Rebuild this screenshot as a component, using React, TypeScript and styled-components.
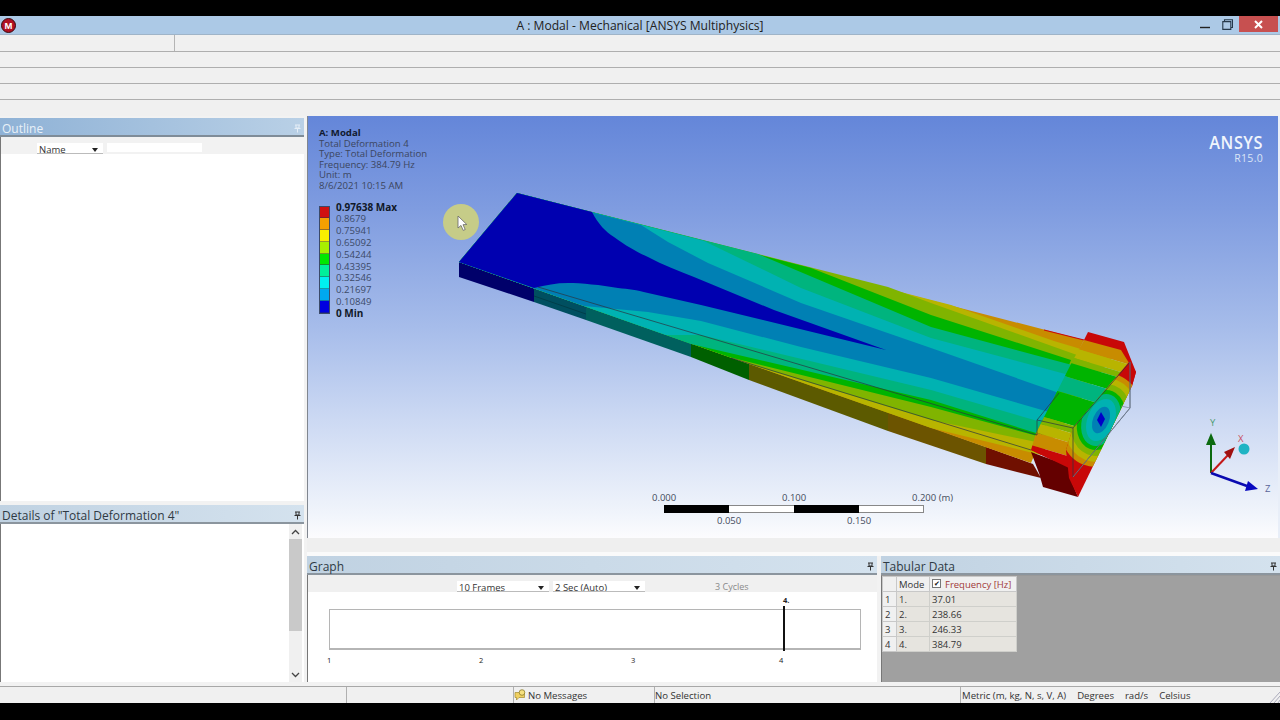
import React from "react";
import styled, { createGlobalStyle } from "styled-components";

const Global = createGlobalStyle`
  html, body { margin: 0; padding: 0; background: #000; }
  body { font-family: "Open Sans", "Noto Sans", Arial, sans-serif; color: #222; }
  * { box-sizing: border-box; }
`;

const Page = styled.div`
  width: 1280px; height: 720px; display: flex; flex-direction: column; background: #000; overflow: hidden;
`;
const BlackBar = styled.div<{ $h: number }>`
  height: ${(p) => p.$h}px; flex: none; background: #000;
`;
const TitleBar = styled.div`
  height: 19px; flex: none; background: #acc9e6; position: relative; display: flex; align-items: center; justify-content: center;
  font-size: 12.1px; color: #222; border-bottom: 1px solid #9fb4c8;
`;
const AppIcon = styled.svg`
  position: absolute; left: 1px; top: 2px; width: 15px; height: 15px;
`;
const WinControls = styled.div`
  position: absolute; right: 2px; top: 0; height: 16px; display: flex; align-items: flex-start;
`;
const WinButton = styled.div<{ $close?: boolean }>`
  width: ${(p) => (p.$close ? 39 : 23)}px; height: 16px; background: ${(p) => (p.$close ? "#c75050" : "transparent")};
  display: flex; align-items: center; justify-content: center;
`;
const ToolRow = styled.div<{ $h?: number; $last?: boolean }>`
  height: ${(p) => p.$h ?? 16}px; flex: none; background: #f0f0f0; display: flex;
  border-bottom: ${(p) => (p.$last ? "none" : "1px solid #aeaeae")};
`;
const ToolCell = styled.div`
  width: 175px; border-right: 1px solid #b4b4b4;
`;
const Main = styled.div`
  flex: 1; min-height: 0; display: flex; background: #f2f2f2;
`;
const LeftCol = styled.div`
  width: 304px; flex: none; display: flex; flex-direction: column; padding: 2px 0 4px; gap: 4px;
`;
const RightCol = styled.div`
  flex: 1; min-width: 0; margin-left: 3px; display: flex; flex-direction: column; padding-bottom: 4px;
`;
const Panel = styled.section<{ $grow?: boolean; $h?: number; $w?: number }>`
  display: flex; flex-direction: column; min-width: 0;
  ${(p) => (p.$grow ? "flex: 1;" : "")}
  ${(p) => (p.$h ? `height: ${p.$h}px; flex: none;` : "")}
  ${(p) => (p.$w ? `width: ${p.$w}px; flex: none;` : "")}
`;
const PanelHead = styled.header<{ $active?: boolean }>`
  height: 19px; flex: none; display: flex; align-items: center; justify-content: space-between; padding: 3px 3px 0 2px;
  font-size: 12px; border-bottom: 2px solid ${(p) => (p.$active ? "#7f8c98" : "#8b959e")};
  color: ${(p) => (p.$active ? "#e9f1f8" : "#2f3a44")};
  background: ${(p) =>
    p.$active ? "linear-gradient(90deg,#8fb2d6,#b9d0e6)" : "linear-gradient(90deg,#c0d2e2,#d4e2ee)"};
`;
const PanelBody = styled.div`
  flex: 1; min-height: 0; position: relative; background: #fff; border-left: 1px solid #777;
  display: flex; flex-direction: column;
`;
const FilterRow = styled.div`
  height: 17px; flex: none; background: #f2f2f2; display: flex; align-items: flex-start; padding: 6px 0 0 36px; gap: 4px;
`;
const ClipSelect = styled.div<{ $w: number }>`
  width: ${(p) => p.$w}px; height: 11px; background: #fff; overflow: hidden; border-bottom: 1px solid #bbb;
  display: flex; justify-content: space-between; align-items: flex-start; padding: 0 5px 0 2px;
  font-size: 9.5px; line-height: 14px; color: #333; white-space: nowrap;
`;
const Arrow = styled.i`
  display: block; width: 0; height: 0; margin-top: 5px; border-left: 3.5px solid transparent; border-right: 3.5px solid transparent; border-top: 4px solid #222;
`;
const SearchBox = styled.div`
  width: 95px; height: 9px; background: #fff;
`;
const DetailBody = styled.div`
  flex: 1; display: flex; justify-content: flex-end; padding-right: 2px;
`;
const Scroll = styled.div`
  width: 13px; background: #f0f0f0; display: flex; flex-direction: column; align-items: center;
`;
const ScrollBtn = styled.div`
  height: 15px; display: flex; align-items: center; justify-content: center; flex: none;
`;
const ScrollThumb = styled.div`
  width: 100%; height: 92px; flex: none; background: #c9c9c9;
`;
const ScrollTrack = styled.div`
  flex: 1;
`;
const Viewport = styled.div`
  height: 422px; flex: none; position: relative; overflow: hidden; border-left: 1px solid #80868f; border-right: 2px solid #e8eef8;
  background: linear-gradient(180deg,#6486d9 0%,#7f9ce0 22%,#a6bcea 50%,#ccd9f3 72%,#f0f4fb 94%,#fcfcfe 100%);
`;
const ModelSvg = styled.svg`
  position: absolute; left: 0; top: 0; width: 973px; height: 422px;
`;
const Annotation = styled.div`
  position: absolute; left: 11px; top: 12px; font-size: 9.6px; line-height: 10.6px; color: #3c4660; white-space: nowrap;
`;
const AnnoTitle = styled.div`
  font-weight: 700; color: #111a30;
`;
const Legend = styled.div`
  display: flex; gap: 6px; margin-top: 10px;
`;
const LegendBar = styled.div`
  display: flex; flex-direction: column; width: 11px; margin-top: 4px; height: 108px; border: 1px solid #3b4a6a;
`;
const Swatch = styled.div<{ $c: string }>`
  flex: 1; background: ${(p) => p.$c}; border-bottom: 1px solid rgba(40,50,80,.45);
`;
const LegendVals = styled.div`
  display: flex; flex-direction: column;
`;
const LegendVal = styled.div<{ $bold?: boolean }>`
  height: 11.8px; line-height: 11.8px; font-size: ${(p) => (p.$bold ? 10 : 9.6)}px; font-weight: ${(p) => (p.$bold ? 700 : 400)}; color: ${(p) => (p.$bold ? "#101828" : "#3c4a68")};
`;
const Logo = styled.div`
  position: absolute; right: 15px; top: 16px; text-align: right; color: #f1f5fc; display: flex; flex-direction: column; gap: 1px;
`;
const LogoName = styled.div`
  font-size: 18.5px; font-weight: 600; line-height: 20px; letter-spacing: .6px; transform: scaleX(.88); transform-origin: right center;
`;
const LogoRel = styled.div`
  font-size: 10.5px; line-height: 11px; letter-spacing: .3px; color: #dbe5f6;
`;
const Strip = styled.div`
  height: 14px; flex: none; background: #efefef;
`;
const Gap = styled.div`
  height: 4px; flex: none; background: #fafafa;
`;
const BottomRow = styled.div`
  flex: 1; min-height: 0; display: flex; gap: 4px;
`;
const GraphBar = styled.div`
  height: 17px; flex: none; background: #f0f0f0; position: relative; display: flex; gap: 4px; padding: 6px 0 0 149px;
`;
const Cycles = styled.span`
  position: absolute; left: 407px; top: 5px; font-size: 9px; line-height: 13px; color: #8a8a8a;
`;
const Chart = styled.div`
  flex: 1; position: relative;
`;
const ChartBox = styled.div`
  position: absolute; left: 21px; top: 17px; width: 532px; height: 41px; border: 1px solid #b5b5b5; border-bottom-width: 2px; background: #fff;
`;
const Marker = styled.div`
  position: absolute; left: 475px; top: 14px; width: 2px; height: 45px; background: #111;
`;
const Tick = styled.span<{ $x: number; $y: number; $bold?: boolean }>`
  position: absolute; left: ${(p) => p.$x}px; top: ${(p) => p.$y}px; font-size: 7.5px; line-height: 10px; color: #222;
  font-weight: ${(p) => (p.$bold ? 700 : 400)};
`;
const TabularBody = styled.div`
  flex: 1; min-height: 0; background: #a0a0a0; border-left: 1px solid #777; border-top: 1px solid #999;
`;
const Table = styled.table`
  border-collapse: collapse; table-layout: fixed; width: 135px; font-size: 9.5px; color: #333;
`;
const Cell = styled.td<{ $w?: number; $head?: boolean; $c?: string }>`
  height: 14.6px; padding: 2px 0 0 2px; white-space: nowrap; overflow: hidden; line-height: 12px;
  width: ${(p) => (p.$w ? `${p.$w}px` : "auto")};
  background: ${(p) => (p.$head ? "#f0f0f0" : "#e6e4df")};
  border: 1px solid ${(p) => (p.$head ? "#c8c8c8" : "#cfcfcb")};
  color: ${(p) => p.$c ?? "#333"};
`;
const Check = styled.span`
  display: inline-flex; width: 9px; height: 9px; border: 1px solid #777; background: #fff; align-items: center; justify-content: center;
  font-size: 7px; line-height: 7px; color: #111; margin-right: 4px; vertical-align: 2px;
`;
const StatusBar = styled.footer`
  height: 17px; flex: none; background: #f0f0f0; border-top: 1px solid #a8a8a8; display: flex; font-size: 9.6px; color: #333; position: relative;
`;
const StatusCell = styled.div<{ $w: number; $noBorder?: boolean }>`
  width: ${(p) => p.$w}px; flex: none; display: flex; align-items: center; gap: 1px; white-space: nowrap; overflow: hidden;
  border-right: ${(p) => (p.$noBorder ? "none" : "1px solid #b0b0b0")};
`;
const Units = styled.div`
  display: flex; gap: 11px; padding-left: 1px; align-items: center;
`;
const Grip = styled.svg`
  position: absolute; right: 0; bottom: 0; width: 12px; height: 14px;
`;

const Pin = ({ c = "#333" }: { c?: string }) => (
  <svg width="7" height="9" viewBox="0 0 7 9">
    <path d="M1 1h5M2 1v3h3V1M.5 4.5h6M3.5 4.5V8.5" fill="none" stroke={c} strokeWidth="1" />
  </svg>
);
const Chevron = ({ up }: { up?: boolean }) => (
  <svg width="9" height="6" viewBox="0 0 9 6">
    <path d={up ? "M1 5l3.5-3.5L8 5" : "M1 1l3.5 3.5L8 1"} fill="none" stroke="#444" strokeWidth="1.3" />
  </svg>
);

const line = (pts: number[][]) => pts.map((p) => p.join(",")).join(" ");
const band = (upper: number[][], lower: number[][]) =>
  line([[458, 262], [516, 193], ...upper, ...lower]);

const C = {
  dark: "#0000b0", blue: "#0080b4", teal: "#00b2b2", tg: "#00b47e", green: "#00b400", yg: "#80b400",
  yellow: "#b8b400", orange: "#c88c00", red: "#c80808",
};

const bands: { c: string; u: number[][]; l: number[][] }[] = [
  { c: C.yellow, u: [[950, 305], [1053, 341], [1110, 358]], l: [[1040, 455], [930, 428]] },
  { c: C.yg, u: [[887, 287], [930, 303], [1090, 360]], l: [[1040, 443], [930, 420], [748, 364]] },
  { c: C.green, u: [[810, 268], [930, 315], [1070, 360]], l: [[1040, 437], [930, 407], [728, 357]] },
  { c: C.tg, u: [[757, 254], [930, 327], [1071, 365]], l: [[1035, 433], [930, 400], [690, 344]] },
  { c: C.teal, u: [[703, 241], [800, 288], [930, 338], [1068, 375]], l: [[1040, 422], [930, 390], [700, 335], [665, 335]] },
  { c: C.blue, u: [[640, 225], [667, 242], [707, 263], [800, 303], [930, 348], [1058, 393]], l: [[1048, 412], [930, 378], [800, 347], [700, 321], [647, 312], [583, 306]] },
];

const side: { c: string; p: number[][] }[] = [
  { c: "#00006a", p: [[458, 262], [533, 288], [533, 302], [458, 277]] },
  { c: "#004f60", p: [[533, 288], [585, 306], [585, 320], [533, 302]] },
  { c: "#00605e", p: [[585, 306], [690, 343], [690, 357], [585, 320]] },
  { c: "#006000", p: [[690, 343], [748, 363], [748, 380], [690, 357]] },
  { c: "#5c5a00", p: [[748, 363], [887, 412], [887, 431], [748, 380]] },
  { c: "#6c5400", p: [[887, 412], [985, 447], [985, 464], [887, 431]] },
  { c: "#701000", p: [[985, 447], [1032, 464], [1040, 478], [985, 464]] },
];

const blockStripes: [string, number][] = [
  [C.orange, 335], [C.yellow, 352], [C.yg, 362], [C.green, 368], [C.tg, 383], [C.green, 400],
  [C.yg, 430], [C.yellow, 438], [C.orange, 448], [C.red, 462],
];
const stripeAt = (y: number, y2: number) =>
  line([[1000, y - 26], [1150, y + 19], [1150, y2 + 19], [1000, y2 - 26]]);

const faceRings: [string, number, number][] = [
  [C.orange, 48, 40], [C.yellow, 43, 35], [C.yg, 37, 29], [C.green, 31, 23], [C.tg, 27, 18.5],
  [C.teal, 22, 13.5], [C.blue, 14, 8],
];

const Model = () => (
  <ModelSvg viewBox="307 116 973 422">
    <defs>
      <clipPath id="blockClip">
        <polygon points="1071,362 1083,340 1123,342 1128,363 1072,428 1068,468 1030,450 1035,433" />
      </clipPath>
      <clipPath id="faceClip">
        <polygon points="1128,362 1135,372 1131,386 1077,497 1068,478 1065,450 1072,428" />
      </clipPath>
    </defs>
    {side.map((s) => (
      <polygon key={s.c} points={line(s.p)} fill={s.c} />
    ))}
    <polyline points="533,296 585,314" stroke="#003a44" strokeWidth="0.8" fill="none" />
    <polygon points="458,262 516,193 1083,340 1071,365 1030,463" fill={C.orange} />
    {bands.map((b) => (
      <polygon key={b.c} points={band(b.u, b.l)} fill={b.c} />
    ))}
    <path
      d="M458 262L516 193L591 212C597 224 605 232 613 237C625 246 636 252 647 257C662 265 678 271 693 277L773 310L885 350L700 305L647 293C635 290 628 289 617 288C600 285 580 283 567 283C555 283 545 285 533 288Z"
      fill={C.dark}
    />
    <polyline points="1043,330 1083,340" stroke={C.red} strokeWidth="1.2" fill="none" />
    <g clipPath="url(#blockClip)">
      {blockStripes.map(([c, y], i) => (
        <polygon key={i} points={stripeAt(y, blockStripes[i + 1]?.[1] ?? 520)} fill={c} />
      ))}
    </g>
    <polygon points="1030,452 1068,466 1070,480 1077,497 1042,487 1038,473" fill="#640000" />
    <polygon points="1030,450 1035,447 1068,459 1068,468" fill={C.red} />
    <polygon points="1083,340 1087,332 1123,342 1135,372 1131,386 1128,363 1120,350" fill={C.red} />
    <g clipPath="url(#faceClip)">
      <rect x="1060" y="355" width="80" height="145" fill={C.red} />
      {faceRings.map(([c, ry, rx]) => (
        <ellipse key={c} cx="1100" cy="420" rx={rx} ry={ry} fill={c} transform="rotate(22 1100 420)" />
      ))}
      <polygon points="1100,412 1104,419 1100,427 1096,420" fill="#0000c8" />
    </g>
    <g stroke="#2a3440" strokeWidth="0.7" fill="none">
      <polyline points="537,287 1036,435" />
      <polyline points="730,358 1030,450" />
      <polyline points="1036,435 1036,420 1072,428 1072,477 1129,408 1129,362 1072,428" />
      <polyline points="1036,420 1058,393" />
    </g>
    <g stroke="#7a8699" strokeWidth="0.7" fill="none">
      <polyline points="1129,362 1129,408 1120,406" />
      <polyline points="1129,408 1072,477" />
    </g>

    <circle cx="460" cy="222" r="18" fill="#c6cc88" />
    <path d="M457 216v12l3-2.6 2.2 5 2-.9-2.2-4.8 3.8-.2z" fill="#fff" stroke="#666" strokeWidth=".8" />

    <g fontFamily="'Open Sans','Noto Sans',sans-serif" fontSize="9.5" fill="#444c5c">
      <rect x="663.5" y="505.5" width="259" height="7" fill="#fff" stroke="#888" />
      <rect x="663" y="505" width="65" height="8" fill="#000" />
      <rect x="793" y="505" width="65" height="8" fill="#000" />
      <text x="651" y="501">0.000</text>
      <text x="781" y="501">0.100</text>
      <text x="911" y="501">0.200 (m)</text>
      <text x="716" y="524">0.050</text>
      <text x="846" y="524">0.150</text>
    </g>

    <g>
      <circle cx="1243" cy="449" r="5.5" fill="#1fb4c4" />
      <line x1="1210" y1="473" x2="1210" y2="444" stroke="#0c6a10" strokeWidth="2" />
      <polygon points="1210,433 1215,445 1205,445" fill="#0c6a10" />
      <line x1="1210" y1="473" x2="1228" y2="454" stroke="#c41818" strokeWidth="2" />
      <polygon points="1234,447 1229,459 1223,452" fill="#a01010" />
      <line x1="1210" y1="473" x2="1246" y2="486" stroke="#0a0ab0" strokeWidth="2.4" />
      <polygon points="1257,489 1244,491 1247,481" fill="#0808c0" />
      <g fontFamily="'Open Sans','Noto Sans',sans-serif" fontSize="9.5">
        <text x="1209" y="426" fill="#4c9a70">Y</text>
        <text x="1237" y="442" fill="#c85060">X</text>
        <text x="1264" y="492" fill="#5a6498">Z</text>
      </g>
    </g>
  </ModelSvg>
);

const legend = [
  ["0.97638 Max", true], ["0.8679"], ["0.75941"], ["0.65092"], ["0.54244"], ["0.43395"],
  ["0.32546"], ["0.21697"], ["0.10849"], ["0 Min", true],
] as [string, boolean?][];
const swatches = ["#d01010", "#f5a000", "#f8ee00", "#a8f000", "#00e800", "#00f09a", "#00f0f0", "#00a8f0", "#0000e0"];
const rows = [
  ["1", "1.", "37.01"], ["2", "2.", "238.66"], ["3", "3.", "246.33"], ["4", "4.", "384.79"],
];

export default function App() {
  return (
    <Page>
      <Global />
      <BlackBar $h={16} />
      <TitleBar>
        <AppIcon viewBox="0 0 15 15">
          <circle cx="7.5" cy="7.5" r="7" fill="#b01022" stroke="#3a0a10" />
          <text x="7.5" y="11" textAnchor="middle" fontSize="9.5" fontWeight="700" fill="#fff" fontFamily="Liberation Sans, sans-serif">M</text>
        </AppIcon>
        A : Modal - Mechanical [ANSYS Multiphysics]
        <WinControls>
          <WinButton>
            <svg width="10" height="10" viewBox="0 0 10 10"><path d="M0 8.5h10" stroke="#222" strokeWidth="1.4" /></svg>
          </WinButton>
          <WinButton>
            <svg width="11" height="11" viewBox="0 0 11 11"><path d="M2.5 2V.8h8v7.7H9M.8 2.6h8v7.8h-8z" fill="none" stroke="#26384a" strokeWidth="1.1" /></svg>
          </WinButton>
          <WinButton $close>
            <svg width="9" height="9" viewBox="0 0 9 9"><path d="M1 1l7 7M8 1l-7 7" stroke="#fff" strokeWidth="2" /></svg>
          </WinButton>
        </WinControls>
      </TitleBar>
      <ToolRow $h={17}><ToolCell /></ToolRow>
      <ToolRow />
      <ToolRow />
      <ToolRow />
      <ToolRow $last />
      <Main>
        <LeftCol>
          <Panel $grow>
            <PanelHead $active>
              Outline
              <Pin c="#e4edf6" />
            </PanelHead>
            <PanelBody>
              <FilterRow>
                <ClipSelect $w={66}>
                  Name
                  <Arrow />
                </ClipSelect>
                <SearchBox />
              </FilterRow>
            </PanelBody>
          </Panel>
          <Panel $h={177}>
            <PanelHead>
              Details of "Total Deformation 4"
              <Pin />
            </PanelHead>
            <PanelBody>
              <DetailBody>
                <Scroll>
                  <ScrollBtn><Chevron up /></ScrollBtn>
                  <ScrollThumb />
                  <ScrollTrack />
                  <ScrollBtn><Chevron /></ScrollBtn>
                </Scroll>
              </DetailBody>
            </PanelBody>
          </Panel>
        </LeftCol>
        <RightCol>
          <Viewport>
            <Model />
            <Annotation>
              <AnnoTitle>A: Modal</AnnoTitle>
              <div>Total Deformation 4</div>
              <div>Type: Total Deformation</div>
              <div>Frequency: 384.79 Hz</div>
              <div>Unit: m</div>
              <div>8/6/2021 10:15 AM</div>
              <Legend>
                <LegendBar>
                  {swatches.map((c) => (
                    <Swatch key={c} $c={c} />
                  ))}
                </LegendBar>
                <LegendVals>
                  {legend.map(([t, b]) => (
                    <LegendVal key={t} $bold={b}>{t}</LegendVal>
                  ))}
                </LegendVals>
              </Legend>
            </Annotation>
            <Logo>
              <LogoName>ANSYS</LogoName>
              <LogoRel>R15.0</LogoRel>
            </Logo>
          </Viewport>
          <Strip />
          <Gap />
          <BottomRow>
            <Panel $grow>
              <PanelHead>
                Graph
                <Pin />
              </PanelHead>
              <PanelBody>
                <GraphBar>
                  <ClipSelect $w={92}>
                    10 Frames
                    <Arrow />
                  </ClipSelect>
                  <ClipSelect $w={92}>
                    2 Sec (Auto)
                    <Arrow />
                  </ClipSelect>
                  <Cycles>3 Cycles</Cycles>
                </GraphBar>
                <Chart>
                  <ChartBox />
                  <Marker />
                  <Tick $x={475} $y={3} $bold>4.</Tick>
                  <Tick $x={19} $y={63}>1</Tick>
                  <Tick $x={171} $y={63}>2</Tick>
                  <Tick $x={323} $y={63}>3</Tick>
                  <Tick $x={471} $y={63}>4</Tick>
                </Chart>
              </PanelBody>
            </Panel>
            <Panel $w={399}>
              <PanelHead>
                Tabular Data
                <Pin />
              </PanelHead>
              <TabularBody>
                <Table>
                  <tbody>
                    <tr>
                      <Cell $w={14} $head />
                      <Cell $w={33} $head>Mode</Cell>
                      <Cell $head $c="#a03a3a"><Check>✔</Check>Frequency [Hz]</Cell>
                    </tr>
                    {rows.map((r) => (
                      <tr key={r[0]}>
                        <Cell $head>{r[0]}</Cell>
                        <Cell>{r[1]}</Cell>
                        <Cell>{r[2]}</Cell>
                      </tr>
                    ))}
                  </tbody>
                </Table>
              </TabularBody>
            </Panel>
          </BottomRow>
        </RightCol>
      </Main>
      <StatusBar>
        <StatusCell $w={347} />
        <StatusCell $w={167} />
        <StatusCell $w={141}>
          <svg width="13" height="12" viewBox="0 0 13 12">
            <path d="M1 3.5h9.5v5H5L2.5 11V8.5H1z" fill="#f0d060" stroke="#a08a30" strokeWidth=".7" />
            <circle cx="8" cy="3.5" r="2.8" fill="#f6e080" stroke="#807020" strokeWidth=".7" />
          </svg>
          No Messages
        </StatusCell>
        <StatusCell $w={306}>No Selection</StatusCell>
        <StatusCell $w={292} $noBorder>
          <Units>
            <span>Metric (m, kg, N, s, V, A)</span>
            <span>Degrees</span>
            <span>rad/s</span>
            <span>Celsius</span>
          </Units>
        </StatusCell>
        <Grip viewBox="0 0 12 14">
          <path d="M2 14L12 3M6 14L12 7M10 14L12 11" stroke="#aab" strokeWidth="1" />
        </Grip>
      </StatusBar>
      <BlackBar $h={17} />
    </Page>
  );
}
